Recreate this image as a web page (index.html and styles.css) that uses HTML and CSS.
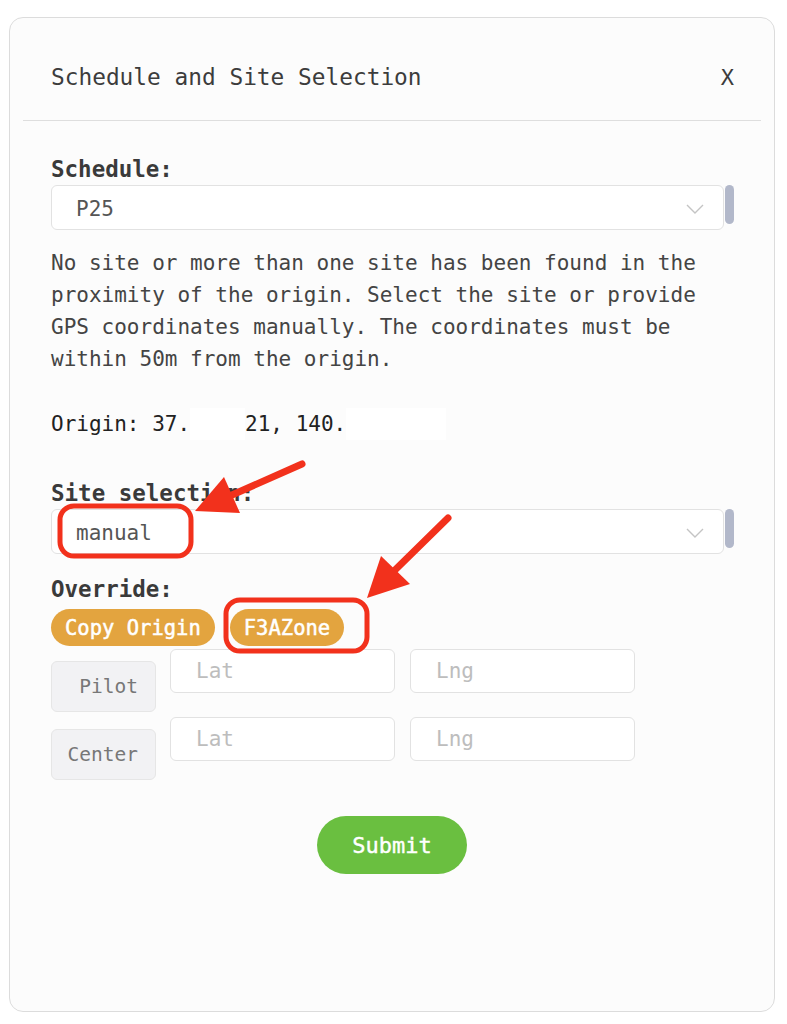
FILE: index.html
```html
<!DOCTYPE html>
<html lang="en">

<head>
  <meta charset="utf-8" />
  <title>Schedule and Site Selection</title>
  <link rel="stylesheet" href="styles.css">
</head>

<body>
  <div class="modal">
    <div class="modalHeader">
      <span class="modalTitle">Schedule and Site Selection</span>
      <span class="closeBtn">X</span>
    </div>

    <div class="modalBody">
      <div class="fieldLabel first">Schedule:</div>
      <div class="selectRow">
        <div class="selectBox">
          <span>P25</span>
          <svg class="chevron" width="18" height="10" viewBox="0 0 18 10"><path d="M1 1 L9 9 L17 1" fill="none" stroke="#c4c4c4" stroke-width="1.4"/></svg>
        </div>
        <div class="thumb"></div>
      </div>

      <p class="note">No site or more than one site has been found in the proximity of the origin. Select the site or provide GPS coordinates manually. The coordinates must be within 50m from the origin.</p>

      <p class="origin">Origin: 37.<span class="redact w4"></span>21, 140.<span class="redact w8"></span></p>

      <div class="fieldLabel">Site selection:</div>
      <div class="selectRow">
        <div class="selectBox">
          <span>manual</span>
          <svg class="chevron" width="18" height="10" viewBox="0 0 18 10"><path d="M1 1 L9 9 L17 1" fill="none" stroke="#c4c4c4" stroke-width="1.4"/></svg>
        </div>
        <div class="thumb"></div>
      </div>

      <div class="fieldLabel override">Override:</div>
      <div class="pills">
        <button class="pill">Copy Origin</button>
        <button class="pill">F3AZone</button>
      </div>

      <div class="coordRow">
        <button class="coordLabel">Pilot</button>
        <input class="coordInput" placeholder="Lat">
        <input class="coordInput" placeholder="Lng">
      </div>
      <div class="coordRow">
        <button class="coordLabel">Center</button>
        <input class="coordInput" placeholder="Lat">
        <input class="coordInput" placeholder="Lng">
      </div>

      <div class="submitRow">
        <button class="submit">Submit</button>
      </div>
    </div>
  </div>

  <svg class="marks" width="787" height="1024" viewBox="0 0 787 1024">
    <rect x="60" y="506" width="131" height="50" rx="14" fill="none" stroke="#f2311c" stroke-width="5"/>
    <rect x="226" y="600" width="141" height="51" rx="14" fill="none" stroke="#f2311c" stroke-width="5"/>
    <line x1="302" y1="464" x2="232" y2="495" stroke="#f2311c" stroke-width="7" stroke-linecap="round"/>
    <polygon points="195,511 240,513 224,477" fill="#f2311c"/>
    <line x1="448" y1="518" x2="395" y2="570" stroke="#f2311c" stroke-width="7" stroke-linecap="round"/>
    <polygon points="367,598 410,584 381,556" fill="#f2311c"/>
  </svg>
</body>

</html>
```

FILE: styles.css
```css
/*
  colors:
    card bg     #fcfcfc
    border      #dcdcdc
    orange      #e3a43f
    green       #6abf40
 */
body {
  margin: 0;
  background-color: #ffffff;
  font-family: "DejaVu Sans Mono", "Liberation Mono", monospace;
  color: #3a3a3a;
  position: relative;
}

div.modal {
  box-sizing: border-box;
  margin: 17px 12px 0 9px;
  height: 995px;
  background-color: #fcfcfc;
  border: 1.5px solid #dcdcdc;
  border-radius: 14px;
}

div.modalHeader {
  display: flex;
  justify-content: space-between;
  align-items: center;
  height: 103px;
  margin: 0 13px;
  padding: 0 27px 0 28px;
  border-bottom: 1.5px solid #dedede;
  box-sizing: border-box;
}

span.modalTitle {
  font-size: 22.8px;
  color: #3c3c3c;
  margin-top: 16px;
}

span.closeBtn {
  font-size: 22px;
  color: #3c3c3c;
  margin-top: 16px;
}

div.modalBody {
  padding: 0 40px 0 41px;
}

div.fieldLabel {
  font-size: 22.5px;
  font-weight: bold;
  line-height: 30px;
  color: #3a3a3a;
  margin-top: 38px;
}

div.fieldLabel.first {
  margin-top: 33px;
}

div.fieldLabel.override {
  margin-top: 20px;
}

div.selectRow {
  display: flex;
  align-items: flex-start;
  margin-top: 1px;
}

div.selectBox {
  flex: 1;
  display: flex;
  justify-content: space-between;
  align-items: center;
  height: 45px;
  box-sizing: border-box;
  border: 1.5px solid #e2e2e2;
  border-radius: 6px;
  background-color: #ffffff;
  padding: 2px 19px 0 24px;
  font-size: 21px;
  color: #555555;
}

div.thumb {
  width: 9px;
  height: 39px;
  margin-left: 1px;
  border-radius: 5px;
  background-color: #b2b8ca;
}

p.note {
  margin: 17px 0 0 0;
  max-width: 660px;
  font-size: 21px;
  line-height: 32px;
  color: #444444;
}

p.origin {
  margin: 33px 0 0 0;
  font-size: 21px;
  line-height: 32px;
  color: #222222;
  white-space: pre;
}

span.redact {
  display: inline-block;
  height: 32px;
  vertical-align: top;
  background-color: #ffffff;
}

span.w4 {
  width: 55px;
}

span.w8 {
  width: 100px;
}

div.pills {
  display: flex;
  gap: 15px;
  margin-top: 5px;
}

button.pill {
  border: none;
  background-color: #e3a43f;
  color: #ffffff;
  font-family: inherit;
  font-size: 20.5px;
  -webkit-text-stroke: 0.5px #ffffff;
  height: 37px;
  padding: 0 14px;
  border-radius: 19px;
}

div.coordRow {
  display: flex;
  align-items: flex-start;
  gap: 14px;
  margin-top: 3px;
}

div.coordRow + div.coordRow {
  margin-top: 5px;
}

button.coordLabel {
  box-sizing: border-box;
  width: 105px;
  height: 51px;
  margin-top: 12px;
  border: 1.5px solid #e6e6e6;
  border-radius: 6px;
  background-color: #f2f2f4;
  color: #777777;
  font-family: inherit;
  font-size: 19.5px;
  text-align: right;
  padding: 0 17px 0 0;
}

input.coordInput {
  box-sizing: border-box;
  width: 225px;
  height: 44px;
  margin: 0 1px 0 0;
  border: 1.5px solid #e2e2e2;
  border-radius: 6px;
  background-color: #ffffff;
  padding: 0 0 0 25px;
  font-family: inherit;
  font-size: 21px;
}

input.coordInput::placeholder {
  color: #bdbdbd;
}

div.submitRow {
  display: flex;
  justify-content: center;
  margin: 36px 0 0 -1px;
}

button.submit {
  width: 150px;
  height: 58px;
  border: none;
  border-radius: 29px;
  background-color: #6abf40;
  color: #ffffff;
  font-family: inherit;
  font-size: 22px;
  -webkit-text-stroke: 0.4px #ffffff;
}

svg.marks {
  position: absolute;
  left: 0;
  top: 0;
  pointer-events: none;
}
```
